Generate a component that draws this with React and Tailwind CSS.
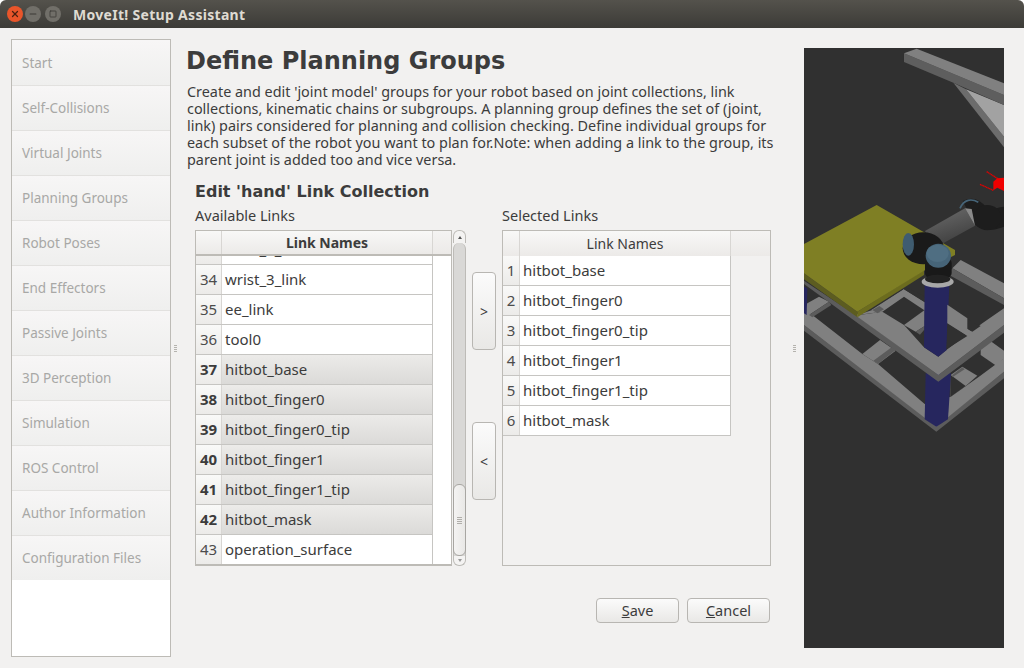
import React from 'react';
import { X, Minus, Square } from 'lucide-react';

const navItems = ['Start', 'Self-Collisions', 'Virtual Joints', 'Planning Groups', 'Robot Poses', 'End Effectors', 'Passive Joints', '3D Perception', 'Simulation', 'ROS Control', 'Author Information', 'Configuration Files'];

const availableLinks = [
  { n: 34, name: 'wrist_3_link' },
  { n: 35, name: 'ee_link' },
  { n: 36, name: 'tool0' },
  { n: 37, name: 'hitbot_base', selected: true },
  { n: 38, name: 'hitbot_finger0', selected: true },
  { n: 39, name: 'hitbot_finger0_tip', selected: true },
  { n: 40, name: 'hitbot_finger1', selected: true },
  { n: 41, name: 'hitbot_finger1_tip', selected: true },
  { n: 42, name: 'hitbot_mask', selected: true },
  { n: 43, name: 'operation_surface' },
];

const selectedLinks = ['hitbot_base', 'hitbot_finger0', 'hitbot_finger0_tip', 'hitbot_finger1', 'hitbot_finger1_tip', 'hitbot_mask'];

const uiFont = "font-['Noto_Sans','Open_Sans',sans-serif]";

const Grip = () => (
  <div className="flex flex-col gap-[1px] w-[3px] items-center">
    {[0, 1, 2, 3].map(i => <div key={i} className="w-[3px] h-[1px] bg-[#b5b3ae]" />)}
  </div>
);

const HeaderCell = ({ className = '', children }) => (
  <div className={`h-full flex items-center justify-center bg-gradient-to-b from-[#f8f8f7] to-[#eceae8] border-r border-[#d8d6d3] ${className}`}>
    {children}
  </div>
);

const LinkRow = ({ n, name, selected }) => (
  <div className="flex h-[30px] w-full shrink-0 border-b border-[#c6c5c2]">
    <div className={`h-full flex items-center justify-center border-r border-[#d8d6d3] bg-gradient-to-b from-[#f9f9f8] to-[#ecebe9] text-[15px] ${selected ? 'font-bold text-[#3c3c3c]' : 'text-[#4c4c4c]'} ${n > 9 ? 'w-[26px]' : 'w-[17px]'}`}>
      {n}
    </div>
    <div className={`flex-1 h-full flex items-center pl-[3px] text-[15px] text-[#3c3c3c] border-r border-[#c6c5c2] ${selected ? 'bg-gradient-to-b from-[#ecebe9] to-[#dbdad8]' : 'bg-white'}`}>
      {name}
    </div>
  </div>
);

const Scrollbar = () => (
  <div className="w-[13px] h-[336px] ml-[1px] flex flex-col">
    <div className="h-[13px] rounded-t-[6px] border border-b-0 border-[#bdbbb7] bg-[#f4f3f2] flex items-center justify-center">
      <div className="w-0 h-0 border-x-[2px] border-x-transparent border-b-[3px] border-b-[#555]" />
    </div>
    <div className="flex-1 bg-[#d9d8d6] border-x border-[#bdbbb7] flex flex-col justify-end rounded-t-[6px]">
      <div className="h-[72px] bg-gradient-to-r from-[#f4f3f2] to-[#e9e8e6] border border-[#a8a6a2] -mx-[1px] rounded-[6px] flex flex-col items-center justify-center gap-[1px]">
        {[0, 1, 2, 3].map(i => <div key={i} className="w-[5px] h-[1px] bg-[#b0aeaa]" />)}
      </div>
    </div>
    <div className="h-[10px] rounded-b-[6px] border border-t-0 border-[#bdbbb7] bg-[#f4f3f2] flex items-center justify-center">
      <div className="w-0 h-0 border-x-[2px] border-x-transparent border-t-[3px] border-t-[#999]" />
    </div>
  </div>
);

const ArrowButton = ({ label }) => (
  <button className="w-[24px] h-[78px] rounded-[4px] border border-[#b8b6b2] bg-gradient-to-b from-[#fbfbfb] to-[#e9e8e6] text-[14px] text-[#3c3c3c] flex items-center justify-center">
    {label}
  </button>
);

const GREY = '#808080';
const EDGE = '#5c5c5c';
const BLUE = '#26265e';

const Scene = () => (
  <svg viewBox="0 0 200 600" className="w-[200px] h-[600px]">
    <defs>
      <linearGradient id="armGrey" x1="0" y1="0" x2="0.4" y2="1">
        <stop offset="0" stopColor="#6e6e6e" />
        <stop offset="1" stopColor="#3e3e3e" />
      </linearGradient>
    </defs>
    <rect width="200" height="600" fill="#303030" />
    {/* roof beams */}
    <g transform="translate(-4 -8) scale(0.33333)">
      <polygon points="460,128 498,148 612,290 612,322" fill="#6c6c6c" />
      <polygon points="498,148 612,195 612,290" fill="#a2a2a2" />
      <polygon points="312,40 312,66 460,128 612,195 612,165" fill="#5e5e5e" />
      <polygon points="312,40 350,26 612,130 612,165" fill={GREY} />
    </g>
    {/* lower frame */}
    <g transform="translate(0 212) scale(0.33333)">
      <polygon points="0,195 0,212 397,515 600,355 600,335 397,498" fill={EDGE} />
      <polygon points="0,150 25,165 175,282 222,312 362,432 440,410 525,350 600,295 600,335 397,500 0,195" fill={GREY} />
      <polygon points="175,282 228,240 275,272 222,312" fill={GREY} />
      <polygon points="208,302 268,258 278,268 222,312" fill={EDGE} />
      <polygon points="440,345 475,320 520,347 485,378 440,410" fill={GREY} />
      <polygon points="440,410 440,345 485,378" fill="#303030" />
      <polygon points="445,345 475,322 482,328 445,352" fill={EDGE} />
      <polygon points="530,255 555,240 600,272 600,295 578,318 530,285" fill={GREY} />
      <polygon points="470,0 600,70 600,115 445,25" fill={GREY} />
      <polygon points="445,25 600,115 600,135 430,42" fill={EDGE} />
      <polygon points="10,130 45,110 75,125 15,165 0,150" fill={GREY} />
      <polygon points="15,165 75,125 82,135 25,172" fill={EDGE} />
      <polygon points="0,80 10,85 8,165 0,160" fill={BLUE} />
      <polygon points="365,340 441,340 432,478 397,500 362,478" fill={BLUE} />
      {/* upper frame */}
      <polygon points="165,172 0,62 0,72 403,365 600,218 600,195 403,345" fill={EDGE} />
      <polygon points="0,55 165,165 235,155 300,195 360,262 403,290 427,270 535,190 600,145 600,195 403,345" fill={GREY} />
      <polygon points="160,165 205,150 300,88 300,110 235,155" fill={GREY} />
      <polygon points="202,150 218,160 300,108 300,88" fill={GREY} />
      <polygon points="205,150 220,160 240,148 226,138" fill={EDGE} />
      <polygon points="300,88 505,215 490,228 360,150 300,110" fill={GREY} />
      <polygon points="300,88 500,212 505,215 530,198 300,78" fill="#303030" />
      <polygon points="300,195 362,150 362,198 335,215" fill={GREY} />
      <polygon points="335,215 362,198 362,208 348,224" fill={EDGE} />
      <polygon points="362,75 436,75 428,270 403,290 360,262" fill={BLUE} />
      <polygon points="430,134 490,175 490,228 430,190" fill={GREY} />
      <polygon points="427,268 430,190 490,228" fill="#303030" />
    </g>
    {/* table plate */}
    <g transform="translate(-4 -8) scale(0.33333)">
      <polygon points="12,700 172,815 172,832 12,718" fill="#5c5c20" />
      <polygon points="172,815 372,690 372,705 172,832" fill="#6c6c1e" />
      <polygon points="12,612 230,495 465,630 465,645 372,692 172,815 12,700" fill="#7f7f24" />
    </g>
    {/* robot arm */}
    <g transform="translate(86 117) scale(0.33333)">
      <line x1="290" y1="20" x2="325" y2="42" stroke="#e00000" strokeWidth="4" strokeDasharray="4 1" />
      <line x1="270" y1="58" x2="310" y2="76" stroke="#e00000" strokeWidth="4" strokeDasharray="4 1" />
      <polygon points="310,50 322,40 342,38 342,78 322,68 310,76" fill="#f00000" />
      <path d="M232 135 C265 118 262 165 295 165 C320 165 330 155 345 155" fill="none" stroke="#1d1d1d" strokeWidth="60" />
      <ellipse cx="292" cy="158" rx="42" ry="38" fill="#1d1d1d" />
      <path d="M210 130 C222 102 245 100 265 112" fill="none" stroke="#466478" strokeWidth="5" />
      <polygon points="105,198 225,130 255,182 135,248" fill="url(#armGrey)" />
      <polygon points="225,130 245,132 255,182" fill="#8a8a8a" />
      <ellipse cx="100" cy="250" rx="62" ry="48" fill="#1a1a1a" />
      <ellipse cx="55" cy="238" rx="17" ry="34" fill="#3f5c70" />
      <rect x="105" y="280" width="80" height="58" rx="14" fill="#191919" />
      <ellipse cx="145" cy="272" rx="38" ry="36" fill="#466478" />
      <ellipse cx="143" cy="265" rx="33" ry="26" fill="#4f6e82" />
      <ellipse cx="143" cy="350" rx="48" ry="18" fill="#a8a8a8" />
      <ellipse cx="143" cy="342" rx="38" ry="13" fill="#222" />
    </g>
  </svg>
);

export default function App() {
  return (
    <div className={`w-[1024px] h-[668px] overflow-hidden bg-white ${uiFont}`}>
      <div className="h-full flex flex-col rounded-t-[6px] overflow-hidden bg-[#f2f1f0]">
        <div className="h-[28px] shrink-0 flex items-center bg-gradient-to-b from-[#54524c] to-[#3c3b37] pl-[7px]">
          <div className="w-[16px] h-[16px] rounded-full bg-[#e9552a] flex items-center justify-center">
            <X size={10} strokeWidth={3} className="text-[#4a2010]" />
          </div>
          <div className="w-[16px] h-[16px] ml-[2px] rounded-full bg-[#716f69] flex items-center justify-center">
            <Minus size={10} strokeWidth={2.5} className="text-[#3c3b37]" />
          </div>
          <div className="w-[16px] h-[16px] ml-[4px] rounded-full bg-[#716f69] flex items-center justify-center">
            <Square size={8} strokeWidth={2.5} className="text-[#3c3b37]" />
          </div>
          <span className="ml-[12px] text-[14px] font-bold tracking-[0.3px] text-[#dfdbd2]">MoveIt! Setup Assistant</span>
        </div>

        <div className="flex-1 flex items-start pt-[11px] pl-[11px]">
          <div className="w-[160px] h-[618px] border border-[#bdbbb6] bg-white flex flex-col">
            {navItems.map(item => (
              <div key={item} className="h-[45px] shrink-0 flex items-center pl-[10px] text-[13.5px] text-[#a8a8a6] bg-gradient-to-b from-[#f7f6f6] to-[#efefee] border-t border-[#e2e1df] first:border-t-[#f7f6f6]">
                {item}
              </div>
            ))}
          </div>

          <div className="w-[16px] h-[618px] flex items-center justify-center pr-[8px]">
            <Grip />
          </div>

          <div className="w-[601px] h-[618px] text-[#3c3c3c]">
            <h1 className="h-[44px] pt-[3px] -ml-[1px] text-[24px] leading-[38px] font-bold font-['DejaVu_Sans',sans-serif]">Define Planning Groups</h1>
            <p className="text-[14.4px] leading-[17px] w-[600px] whitespace-nowrap">
              Create and edit 'joint model' groups for your robot based on joint collections, link<br />
              collections, kinematic chains or subgroups. A planning group defines the set of (joint,<br />
              link) pairs considered for planning and collision checking. Define individual groups for<br />
              each subset of the robot you want to plan for.Note: when adding a link to the group, its<br />
              parent joint is added too and vice versa.
            </p>
            <h2 className="ml-[8px] mt-[14px] h-[24px] text-[16px] leading-[20px] font-bold font-['DejaVu_Sans',sans-serif]">Edit 'hand' Link Collection</h2>
            <div className="ml-[8px] flex">
              <div>
                <div className="h-[24px] pt-[1px] text-[14.5px] leading-[17px]">Available Links</div>
                <div className="flex">
                  <div className="w-[257px] h-[336px] border border-[#bdbbb6] border-b-2 bg-white flex flex-col">
                    <div className="h-[25px] shrink-0 flex border-b-2 border-[#bdbbb6]">
                      <HeaderCell className="w-[26px]" />
                      <HeaderCell className="w-[211px] text-[14px] font-bold">Link Names</HeaderCell>
                      <div className="flex-1 bg-gradient-to-b from-[#f4f3f2] to-[#eceae8]" />
                    </div>
                    <div className="flex flex-col overflow-hidden w-[237px]">
                      <div className="h-[9px] overflow-hidden flex items-end border-b border-[#c6c5c2] shrink-0">
                        <div className="shrink-0 w-full -mb-[1px]">
                          <LinkRow n={33} name="wrist_2_link" />
                        </div>
                      </div>
                      {availableLinks.map(l => <LinkRow key={l.n} {...l} />)}
                    </div>
                  </div>
                  <Scrollbar />
                  <div className="w-[24px] ml-[6px] flex flex-col">
                    <div className="h-[42px]" />
                    <ArrowButton label=">" />
                    <div className="h-[72px]" />
                    <ArrowButton label="<" />
                  </div>
                </div>
              </div>
              <div className="ml-[6px]">
                <div className="h-[24px] pt-[1px] text-[14.5px] leading-[17px]">Selected Links</div>
                <div className="w-[269px] h-[336px] border border-[#bdbbb6] bg-[#f2f1f0] flex flex-col">
                  <div className="h-[25px] shrink-0 flex bg-gradient-to-b from-[#f4f3f2] to-[#eceae8]">
                    <HeaderCell className="w-[17px]" />
                    <HeaderCell className="w-[211px] text-[14px]">Link Names</HeaderCell>
                  </div>
                  <div className="w-[228px] flex flex-col">
                    {selectedLinks.map((name, i) => <LinkRow key={name} n={i + 1} name={name} />)}
                  </div>
                </div>
                <div className="flex justify-end gap-[8px] mt-[32px] mr-[1px] text-[14.5px]">
                  <button className="w-[83px] h-[25px] rounded-[4px] border border-[#b8b6b2] bg-gradient-to-b from-[#fbfbfb] to-[#e9e8e6]"><span className="underline">S</span>ave</button>
                  <button className="w-[83px] h-[25px] rounded-[4px] border border-[#b8b6b2] bg-gradient-to-b from-[#fbfbfb] to-[#e9e8e6]"><span className="underline">C</span>ancel</button>
                </div>
              </div>
            </div>
          </div>

          <div className="h-[618px] w-[16px] ml-[-2px] flex items-center justify-center">
            <Grip />
          </div>

          <div className="h-[618px] ml-[2px] flex items-center">
            <Scene />
          </div>
        </div>
      </div>
    </div>
  );
}
